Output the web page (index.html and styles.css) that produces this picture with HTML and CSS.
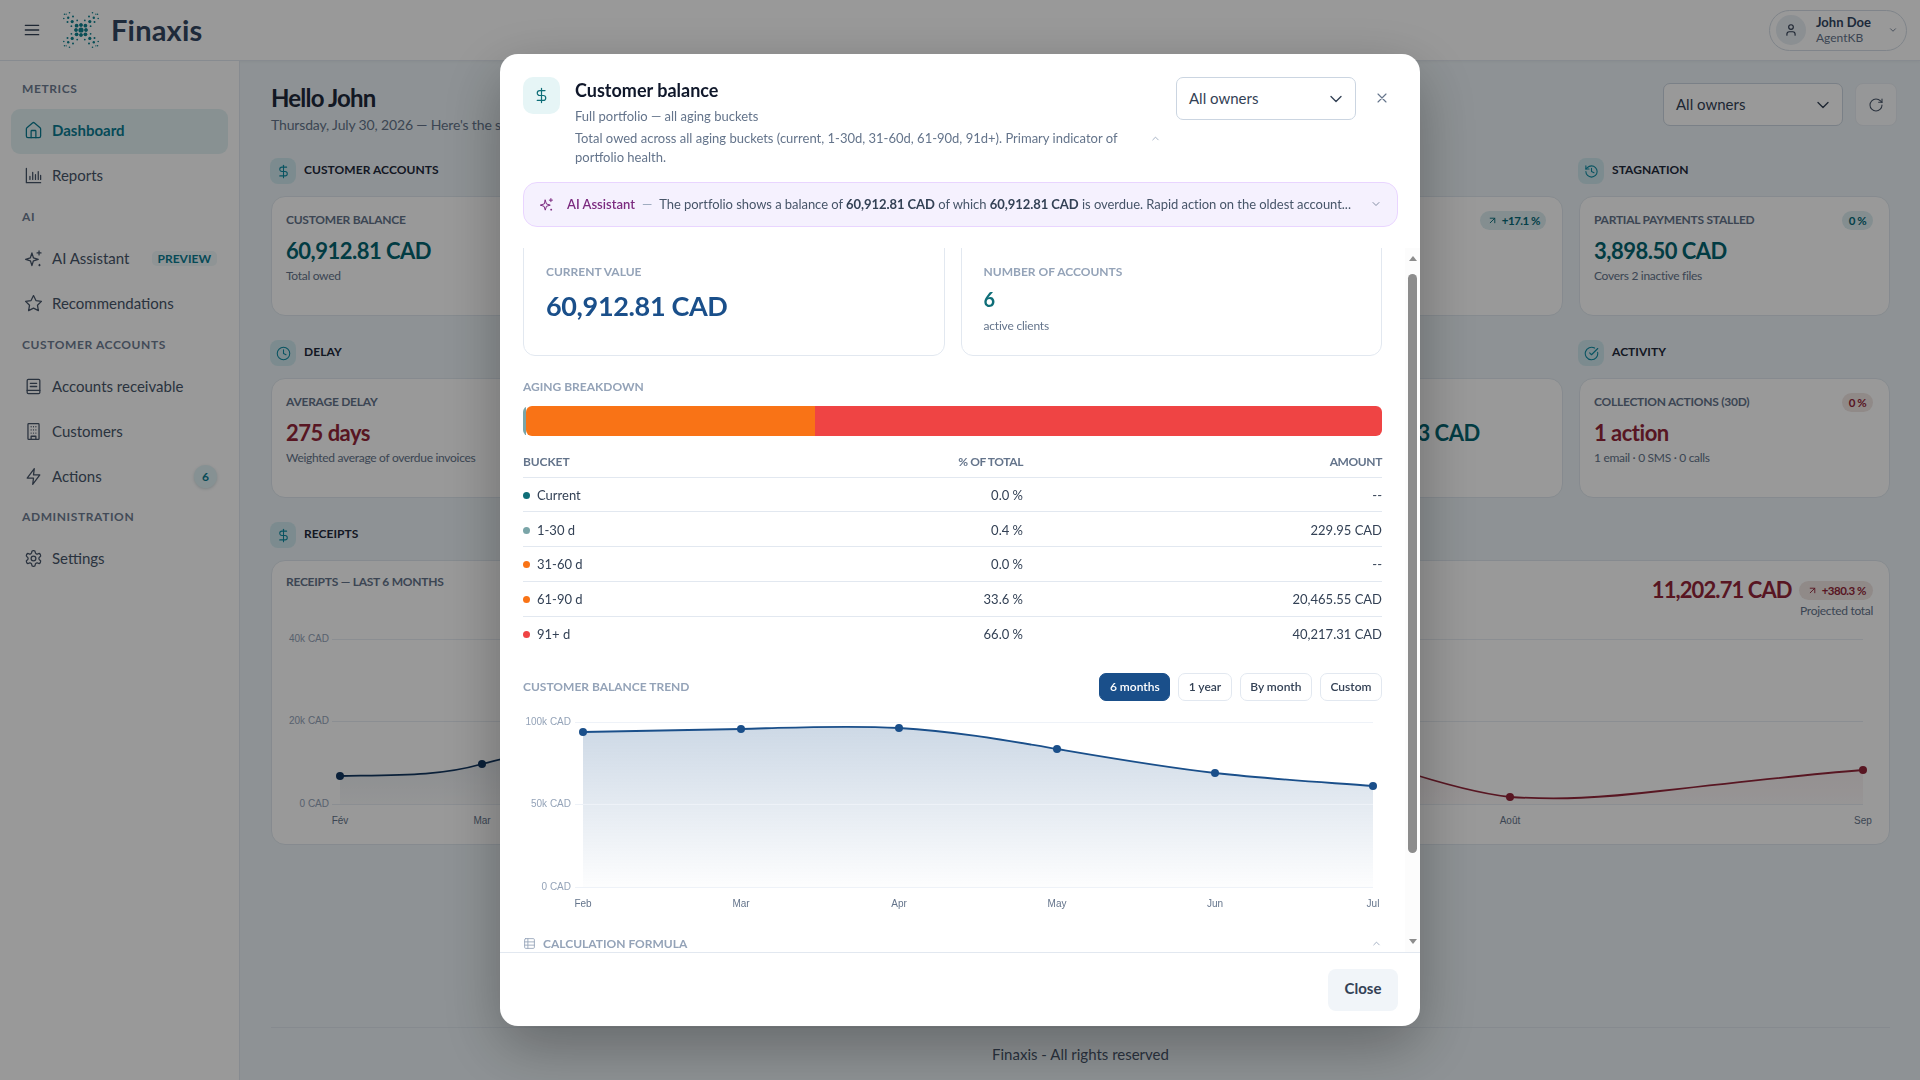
FILE: index.html
```html
<!DOCTYPE html>
<html lang="en">
<head>
<meta charset="utf-8">
<title>Finaxis</title>
<link rel="stylesheet" href="styles.css">
</head>
<body>
<svg class="sprite" xmlns="http://www.w3.org/2000/svg">
  <symbol id="i-home" viewBox="0 0 24 24"><path d="M15 21v-8a1 1 0 0 0-1-1h-4a1 1 0 0 0-1 1v8"/><path d="M3 10a2 2 0 0 1 .709-1.528l7-5.999a2 2 0 0 1 2.582 0l7 5.999A2 2 0 0 1 21 10v9a2 2 0 0 1-2 2H5a2 2 0 0 1-2-2z"/></symbol>
  <symbol id="i-chart" viewBox="0 0 24 24"><path d="M3 3v18h18"/><path d="M7.500 17v-4M11 17V8M14.500 17v-6M18 17V7M21 17v-5"/></symbol>
  <symbol id="i-spark" viewBox="0 0 24 24"><path d="M10 5l1.900 6.100L18 13l-6.100 1.900L10 21l-1.900-6.100L2 13l6.100-1.900z"/><path d="M19 2.500v5M16.500 5h5M19.500 19.500v1.500M18.800 20.300h1.500"/></symbol>
  <symbol id="i-star" viewBox="0 0 24 24"><path d="M12 2l3.090 6.260L22 9.270l-5 4.870 1.180 6.880L12 17.770l-6.180 3.250L7 14.140 2 9.270l6.910-1.010L12 2z"/></symbol>
  <symbol id="i-ledger" viewBox="0 0 24 24"><rect x="4" y="3" width="16" height="18" rx="1.500"/><path d="M8 8h8M8 12h8M4 17h16"/></symbol>
  <symbol id="i-building" viewBox="0 0 24 24"><rect x="5" y="2" width="14" height="20" rx="1"/><path d="M9 22v-4h6v4M9 6h.01M12 6h.01M15 6h.01M9 10h.01M12 10h.01M15 10h.01M9 14h.01M12 14h.01M15 14h.01"/></symbol>
  <symbol id="i-zap" viewBox="0 0 24 24"><path d="M13 2 4 14h8l-1 8 9-12h-8l1-8z"/></symbol>
  <symbol id="i-gear" viewBox="0 0 24 24"><path d="M12.220 2h-.44a2 2 0 0 0-2 2v.18a2 2 0 0 1-1 1.730l-.43.25a2 2 0 0 1-2 0l-.15-.08a2 2 0 0 0-2.730.73l-.22.38a2 2 0 0 0 .73 2.730l.15.1a2 2 0 0 1 1 1.720v.51a2 2 0 0 1-1 1.740l-.15.09a2 2 0 0 0-.73 2.730l.22.38a2 2 0 0 0 2.730.73l.15-.08a2 2 0 0 1 2 0l.43.25a2 2 0 0 1 1 1.730V20a2 2 0 0 0 2 2h.44a2 2 0 0 0 2-2v-.18a2 2 0 0 1 1-1.730l.43-.25a2 2 0 0 1 2 0l.15.08a2 2 0 0 0 2.730-.73l.22-.39a2 2 0 0 0-.73-2.730l-.15-.08a2 2 0 0 1-1-1.740v-.5a2 2 0 0 1 1-1.740l.15-.09a2 2 0 0 0 .73-2.730l-.22-.38a2 2 0 0 0-2.730-.73l-.15.08a2 2 0 0 1-2 0l-.43-.25a2 2 0 0 1-1-1.730V4a2 2 0 0 0-2-2z"/><circle cx="12" cy="12" r="3"/></symbol>
  <symbol id="i-dollar" viewBox="0 0 24 24"><path d="M12 2v20"/><path d="M17 5H9.500a3.500 3.500 0 0 0 0 7h5a3.500 3.500 0 0 1 0 7H6"/></symbol>
  <symbol id="i-clock" viewBox="0 0 24 24"><circle cx="12" cy="12" r="10"/><path d="M12 6v6l4 2"/></symbol>
  <symbol id="i-history" viewBox="0 0 24 24"><path d="M3 12a9 9 0 1 0 9-9 9.750 9.750 0 0 0-6.740 2.740L3 8"/><path d="M3 3v5h5"/><path d="M12 7v5l4 2"/></symbol>
  <symbol id="i-check" viewBox="0 0 24 24"><path d="M21.801 10A10 10 0 1 1 17 3.335"/><path d="m9 11 3 3L22 4"/></symbol>
  <symbol id="i-user" viewBox="0 0 24 24"><path d="M19 21v-2a4 4 0 0 0-4-4H9a4 4 0 0 0-4 4v2"/><circle cx="12" cy="7" r="4"/></symbol>
  <symbol id="i-refresh" viewBox="0 0 24 24"><path d="M21 12a9 9 0 1 1-9-9c2.520 0 4.930 1 6.740 2.740L21 8"/><path d="M21 3v5h-5"/></symbol>
  <symbol id="i-upright" viewBox="0 0 24 24"><path d="M7 7h10v10"/><path d="M7 17 17 7"/></symbol>
  <symbol id="i-down" viewBox="0 0 24 24"><path d="m6 9 6 6 6-6"/></symbol>
  <symbol id="i-up" viewBox="0 0 24 24"><path d="m18 15-6-6-6 6"/></symbol>
  <symbol id="i-x" viewBox="0 0 24 24"><path d="M18 6 6 18M6 6l12 12"/></symbol>
  <symbol id="i-table" viewBox="0 0 24 24"><rect x="3" y="3" width="18" height="18" rx="2"/><path d="M3 9h18M3 15h18M9 3v18"/></symbol>
  <symbol id="i-menu" viewBox="0 0 24 24"><path d="M2 5h20M2 12h20M2 19h20"/></symbol>
</svg>

<div class="app">
  <header class="topbar">
    <button class="burger"><svg class="ico ico-menu"><use href="#i-menu"/></svg></button>
    <svg class="logo" viewBox="0 0 40 40" aria-hidden="true">
      <defs>
        <g id="quad">
          <circle cx="4.400" cy="4.300" r="1.900"/><circle cx="8.800" cy="8.400" r="1.600"/><circle cx="12.800" cy="12.300" r="1.200"/><circle cx="16.500" cy="15.800" r="0.800"/>
          <circle cx="9.600" cy="3.800" r="0.900"/><circle cx="3.800" cy="9.600" r="0.900"/><circle cx="13.500" cy="8" r="1"/><circle cx="8" cy="13.500" r="1"/>
          <circle cx="17.200" cy="11.500" r="0.800"/><circle cx="11.500" cy="17.200" r="0.800"/><circle cx="5" cy="0" r="1.700"/><circle cx="0" cy="5" r="1.700"/>
          <circle cx="14.800" cy="15.800" r="0.600"/>
        </g>
      </defs>
      <g class="logo-dots" transform="translate(20 20)">
        <circle r="2.600"/>
        <use href="#quad"/><use href="#quad" transform="scale(-1 1)"/><use href="#quad" transform="scale(1 -1)"/><use href="#quad" transform="scale(-1 -1)"/>
      </g>
    </svg>
    <span class="brand">Finaxis</span>
    <div class="user">
      <span class="avatar"><svg class="ico ico-user"><use href="#i-user"/></svg></span>
      <span class="user-text"><b>John Doe</b><small>AgentKB</small></span>
      <svg class="ico ico-user-chev"><use href="#i-down"/></svg>
    </div>
  </header>

  <div class="shell">
    <nav class="sidebar">
      <div class="nav-label nav-label-first">METRICS</div>
      <a class="nav-item active"><svg class="ico"><use href="#i-home"/></svg><span>Dashboard</span></a>
      <a class="nav-item"><svg class="ico"><use href="#i-chart"/></svg><span>Reports</span></a>
      <div class="nav-label">AI</div>
      <a class="nav-item"><svg class="ico"><use href="#i-spark"/></svg><span>AI Assistant</span><em class="pill-preview">PREVIEW</em></a>
      <a class="nav-item"><svg class="ico"><use href="#i-star"/></svg><span>Recommendations</span></a>
      <div class="nav-label">CUSTOMER ACCOUNTS</div>
      <a class="nav-item"><svg class="ico"><use href="#i-ledger"/></svg><span>Accounts receivable</span></a>
      <a class="nav-item"><svg class="ico"><use href="#i-building"/></svg><span>Customers</span></a>
      <a class="nav-item"><svg class="ico"><use href="#i-zap"/></svg><span>Actions</span><em class="pill-count">6</em></a>
      <div class="nav-label nav-label-last">ADMINISTRATION</div>
      <a class="nav-item"><svg class="ico"><use href="#i-gear"/></svg><span>Settings</span></a>
    </nav>

    <main class="main">
      <div class="page-head">
        <div>
          <h1>Hello John</h1>
          <p>Thursday, July 30, 2026 — Here's the state of your portfolio</p>
        </div>
        <div class="page-tools">
          <div class="select"><span class="sel-text">All owners</span><svg class="ico ico-sel"><use href="#i-down"/></svg></div>
          <button class="refresh"><svg class="ico"><use href="#i-refresh"/></svg></button>
        </div>
      </div>

      <div class="kpi-grid">
        <div class="sec sec-4"><span class="sec-ico"><svg class="ico"><use href="#i-dollar"/></svg></span><span class="sec-text">CUSTOMER ACCOUNTS</span></div>
        <div class="sec"><span class="sec-ico"><svg class="ico"><use href="#i-history"/></svg></span><span class="sec-text">STAGNATION</span></div>

        <div class="card"><div class="card-top"><span class="card-label">CUSTOMER BALANCE</span></div><div class="val teal">60,912.81 CAD</div><div class="hint">Total owed</div></div>
        <div class="card"></div>
        <div class="card"></div>
        <div class="card"><div class="card-top"><span class="card-label">OVERDUE</span><span class="pill pill-teal"><svg class="ico ico-trend"><use href="#i-upright"/></svg>+17.1 %</span></div></div>
        <div class="card"><div class="card-top"><span class="card-label">PARTIAL PAYMENTS STALLED</span><span class="pill pill-teal pill-zero">0 %</span></div><div class="val teal">3,898.50 CAD</div><div class="hint">Covers 2 inactive files</div></div>

        <div class="sec sec-4"><span class="sec-ico"><svg class="ico"><use href="#i-clock"/></svg></span><span class="sec-text">DELAY</span></div>
        <div class="sec"><span class="sec-ico"><svg class="ico"><use href="#i-check"/></svg></span><span class="sec-text">ACTIVITY</span></div>

        <div class="card"><div class="card-top"><span class="card-label">AVERAGE DELAY</span></div><div class="val red">275 days</div><div class="hint">Weighted average of overdue invoices</div></div>
        <div class="card"></div>
        <div class="card"></div>
        <div class="card"><div class="card-top"><span class="card-label">AVERAGE</span></div><div class="val teal">Total: 110,152.83 CAD</div></div>
        <div class="card"><div class="card-top"><span class="card-label">COLLECTION ACTIONS (30D)</span><span class="pill pill-red pill-zero">0 %</span></div><div class="val red">1 action</div><div class="hint">1 email · 0 SMS · 0 calls</div></div>

        <div class="sec sec-5"><span class="sec-ico"><svg class="ico"><use href="#i-dollar"/></svg></span><span class="sec-text">RECEIPTS</span></div>

        <div class="card card-chart">
          <div class="chart-head">
            <span class="card-label">RECEIPTS — LAST 6 MONTHS</span>
            <div class="chart-total">
              <div class="chart-total-row"><span class="val-total">11,202.71 CAD</span><span class="pill pill-red pill-wide"><svg class="ico ico-trend"><use href="#i-upright"/></svg>+380.3 %</span></div>
              <div class="hint">Projected total</div>
            </div>
          </div>
          <svg class="receipts-svg" viewBox="286 625 1587 210">
            <defs>
              <linearGradient id="gBlue" x1="0" y1="0" x2="0" y2="1"><stop offset="0" stop-color="#12365f" stop-opacity=".12"/><stop offset="1" stop-color="#12365f" stop-opacity=".03"/></linearGradient>
              <linearGradient id="gRed" x1="0" y1="0" x2="0" y2="1"><stop offset="0" stop-color="#93263a" stop-opacity=".07"/><stop offset="1" stop-color="#93263a" stop-opacity=".03"/></linearGradient>
            </defs>
            <g class="grid-line"><path d="M332 639.500H1863M332 721.500H1863M332 804.500H1863"/></g>
            <g class="axis-y"><text x="329" y="642">40k CAD</text><text x="329" y="724">20k CAD</text><text x="329" y="807">0 CAD</text></g>
            <g class="axis-x"><text x="340" y="824">Fév</text><text x="482" y="824">Mar</text><text x="1510" y="824">Août</text><text x="1863" y="824">Sep</text></g>
            <path fill="url(#gBlue)" d="M340 776C400 775 440 776 482 764C520 754 560 745 640 740V804H340Z"/>
            <path fill="url(#gRed)" d="M1400 770C1440 783 1475 793 1510 797C1560 800 1600 798 1660 791C1730 783 1800 775 1863 770V804H1400Z"/>
            <path class="line-navy" d="M340 776C400 775 440 776 482 764C520 754 560 745 640 740"/>
            <path class="line-red" d="M1400 770C1440 783 1475 793 1510 797C1560 800 1600 798 1660 791C1730 783 1800 775 1863 770"/>
            <circle class="dot-navy" cx="340" cy="776" r="4"/><circle class="dot-navy" cx="482" cy="764" r="4"/>
            <circle class="dot-red" cx="1510" cy="797" r="4"/><circle class="dot-red" cx="1863" cy="770" r="4"/>
          </svg>
        </div>
      </div>

      <footer class="page-foot">Finaxis - All rights reserved</footer>
    </main>
  </div>
</div>

<div class="overlay">
  <section class="modal">
    <div class="m-head">
      <span class="m-ico"><svg class="ico"><use href="#i-dollar"/></svg></span>
      <div class="m-titles">
        <h2>Customer balance</h2>
        <p class="m-sub">Full portfolio — all aging buckets</p>
        <p class="m-desc">Total owed across all aging buckets (current, 1-30d, 31-60d, 61-90d, 91d+). Primary indicator of portfolio health.</p>
      </div>
      <svg class="ico ico-collapse"><use href="#i-up"/></svg>
      <div class="select select-modal"><span class="sel-text">All owners</span><svg class="ico ico-sel"><use href="#i-down"/></svg></div>
      <svg class="ico ico-close"><use href="#i-x"/></svg>
    </div>

    <div class="ai-strip">
      <svg class="ico ico-ai"><use href="#i-spark"/></svg>
      <span class="ai-name">AI Assistant</span><span class="ai-dash">—</span>
      <span class="ai-text">The portfolio shows a balance of <b>60,912.81 CAD</b> of which <b>60,912.81 CAD</b> is overdue. Rapid action on the oldest account...</span>
      <svg class="ico ico-ai-chev"><use href="#i-down"/></svg>
    </div>

    <div class="m-scroll">
      <div class="m-body" id="modalBody">
        <div class="stat-row">
          <div class="stat"><div class="stat-label">CURRENT VALUE</div><div class="stat-big">60,912.81 CAD</div></div>
          <div class="stat"><div class="stat-label">NUMBER OF ACCOUNTS</div><div class="stat-num">6</div><div class="stat-hint">active clients</div></div>
        </div>

        <div class="m-label m-label-aging">AGING BREAKDOWN</div>
        <div class="aging-bar">
          <span class="seg seg-a"></span><span class="seg seg-b"></span><span class="seg seg-c"></span>
        </div>

        <table class="aging-table">
          <thead><tr><th>BUCKET</th><th class="num">% OF TOTAL</th><th class="num">AMOUNT</th></tr></thead>
          <tbody>
            <tr><td><i class="dot dot-1"></i>Current</td><td class="num">0.0 %</td><td class="num">--</td></tr>
            <tr><td><i class="dot dot-2"></i>1-30 d</td><td class="num">0.4 %</td><td class="num">229.95 CAD</td></tr>
            <tr><td><i class="dot dot-3"></i>31-60 d</td><td class="num">0.0 %</td><td class="num">--</td></tr>
            <tr><td><i class="dot dot-3"></i>61-90 d</td><td class="num">33.6 %</td><td class="num">20,465.55 CAD</td></tr>
            <tr><td><i class="dot dot-4"></i>91+ d</td><td class="num">66.0 %</td><td class="num">40,217.31 CAD</td></tr>
          </tbody>
        </table>

        <div class="trend-head">
          <span class="m-label">CUSTOMER BALANCE TREND</span>
          <div class="range">
            <button class="rbtn rbtn-on">6 months</button><button class="rbtn">1 year</button><button class="rbtn">By month</button><button class="rbtn">Custom</button>
          </div>
        </div>

        <svg class="trend-svg" viewBox="523 710 859 205">
          <defs>
            <linearGradient id="gTrend" x1="0" y1="0" x2="0" y2="1"><stop offset="0" stop-color="#1a4f8a" stop-opacity=".22"/><stop offset="1" stop-color="#1a4f8a" stop-opacity=".01"/></linearGradient>
          </defs>
          <path fill="url(#gTrend)" d="M583 732C636 731 688 730 741 729C794 727.500 846 725 899 728C952 731 1004 740 1057 749C1110 758 1162 767 1215 773C1268 779 1320 782 1373 786V887H583Z"/>
          <g class="grid-line-m"><path d="M575 722.500H1373M575 804.500H1373M575 887.500H1373"/></g>
          <g class="axis-y-m"><text x="571" y="724.500">100k CAD</text><text x="571" y="806.500">50k CAD</text><text x="571" y="889.500">0 CAD</text></g>
          <g class="axis-x-m"><text x="583" y="906.500">Feb</text><text x="741" y="906.500">Mar</text><text x="899" y="906.500">Apr</text><text x="1057" y="906.500">May</text><text x="1215" y="906.500">Jun</text><text x="1373" y="906.500">Jul</text></g>
          <path class="line-blue" d="M583 732C636 731 688 730 741 729C794 727.500 846 725 899 728C952 731 1004 740 1057 749C1110 758 1162 767 1215 773C1268 779 1320 782 1373 786"/>
          <circle class="dot-blue" cx="583" cy="732" r="4"/><circle class="dot-blue" cx="741" cy="729" r="4"/><circle class="dot-blue" cx="899" cy="728" r="4"/><circle class="dot-blue" cx="1057" cy="749" r="4"/><circle class="dot-blue" cx="1215" cy="773" r="4"/><circle class="dot-blue" cx="1373" cy="786" r="4"/>
        </svg>

        <div class="formula-head"><svg class="ico ico-table"><use href="#i-table"/></svg><span>CALCULATION FORMULA</span><svg class="ico ico-formula-chev"><use href="#i-up"/></svg></div>
        <div class="formula-body">Sum of open balances across all aging buckets.</div>
      </div>
      <div class="scrollbar" aria-hidden="true">
        <span class="sb-up"></span><span class="sb-thumb"></span><span class="sb-down"></span>
      </div>
    </div>

    <div class="m-foot"><button class="btn-close">Close</button></div>
  </section>
</div>
<script src="script.js"></script>
</body>
</html>
```
FILE: styles.css
```css
*{box-sizing:border-box}
html,body{margin:0;height:100%;overflow:hidden}
body{font-family:"Lato","Liberation Sans",sans-serif;color:#334155;background:#edf4f8}
.sprite{display:none}
.ico{width:16px;height:16px;fill:none;stroke:currentColor;stroke-width:2;stroke-linecap:round;stroke-linejoin:round;flex:none}
button{font:inherit;border:0;background:none;padding:0;color:inherit}

.app{height:100vh;display:flex;flex-direction:column}
.topbar{height:61px;flex:none;background:#fff;border-bottom:1px solid #e2e8f0;box-shadow:0 1px 3px rgba(0,0,0,.04);display:flex;align-items:center;padding:0 13px 0 24px}
.burger{display:flex;width:16px;height:16px;color:#334155}
.ico-menu{width:16px;height:16px}
.logo{width:40px;height:40px;margin-left:21px}
.logo-dots{fill:#0f8290}
.brand{font-size:29px;font-weight:700;color:#334662;margin-left:10px;letter-spacing:.2px;padding-bottom:2px}
.user{margin-left:auto;width:138px;height:41px;border:1px solid #d5dde6;border-radius:21px;display:flex;align-items:center;padding:0 8px 0 6px}
.avatar{width:30px;height:30px;border-radius:50%;background:#e8eef4;display:flex;align-items:center;justify-content:center;color:#334155}
.ico-user{width:14px;height:14px}
.user-text{display:flex;flex-direction:column;margin-left:10px;line-height:16px}
.user-text b{font-size:13px;font-weight:700;color:#334662}
.user-text small{font-size:12px;color:#64748b}
.ico-user-chev{width:10px;height:10px;margin-left:auto;color:#64748b}

.shell{flex:1;display:flex;min-height:0}
.sidebar{width:240px;flex:none;background:#fff;border-right:1px solid #e2e8f0;padding:19px 11px 0}
.nav-label{height:18px;line-height:18px;margin:9px 0 11px 11px;font-size:12px;font-weight:700;letter-spacing:.6px;color:#6f7d93}
.nav-label-first{margin-top:0}
.nav-label-last{margin-top:8px}
.nav-item{height:45px;display:flex;align-items:center;padding:0 11px 3px 13px;font-size:15px;color:#475569;border-radius:9px}
.nav-item .ico{width:19px;height:19px;stroke-width:1.6;margin-right:9px}
.nav-item.active{background:#e3f2f4;color:#0b7c92;font-weight:700}
.pill-preview{margin-left:auto;font-style:normal;font-size:12px;font-weight:700;color:#0b7c92;background:#eef7f9;border-radius:5px;padding:0 6px;height:15px;line-height:15px}
.pill-count{margin-left:auto;font-style:normal;font-size:12px;font-weight:700;color:#0b7c92;background:#e0f2f5;width:23px;height:23px;border-radius:50%;display:flex;align-items:center;justify-content:center;box-shadow:0 1px 3px rgba(0,60,80,.18)}

.main{flex:1;min-width:0;display:flex;flex-direction:column;padding:22px 30px 0 31px}
.page-head{display:flex;justify-content:space-between;align-items:flex-start;height:75px;margin-right:-7px}
.page-head h1{margin:0;font-size:24px;line-height:30px;font-weight:700;color:#1e293b;letter-spacing:-.8px}
.page-head p{margin:3px 0 0;font-size:14px;line-height:18px;color:#64748b;letter-spacing:-.15px}
.page-tools{display:flex;gap:12px}
.select{width:180px;height:43px;border:1px solid #cbd5e1;border-radius:7px;background:#fff;display:flex;align-items:center;justify-content:space-between;padding:0 9px 0 12px;font-size:15px;color:#334155}
.sel-text{padding-bottom:2px}
.ico-sel{width:20px;height:20px;stroke-width:1.6}
.refresh{width:42px;height:43px;border:1px solid #e8edf3;border-radius:8px;background:#fbfcfd;display:flex;align-items:center;justify-content:center;color:#475569}
.refresh .ico{stroke-width:1.6}

.kpi-grid{display:grid;grid-template-columns:repeat(5,311px);column-gap:16px;row-gap:0;grid-template-rows:26px 156px 26px 156px 26px 297px}
.sec{display:flex;align-items:center;font-size:12px;font-weight:700;letter-spacing:.05px;color:#1e293b;margin-left:-1px}
.sec-text{padding-bottom:3px}
.sec-4{grid-column:span 4}
.sec-5{grid-column:span 5}
.sec-ico{width:26px;height:26px;border-radius:8px;background:#cfe8ee;display:flex;align-items:center;justify-content:center;margin-right:8px;color:#0e8ba3}
.sec-ico .ico{width:15px;height:15px;stroke-width:1.7}
.card{background:#fff;border:1px solid #dfe7ef;border-radius:14px;padding:13px 16px 13px 14px;margin-top:12px;margin-bottom:24px;min-width:0}
.card-top{display:flex;justify-content:space-between;align-items:center;height:19px}
.card-label{font-size:12px;font-weight:700;color:#64748b;letter-spacing:-.25px;white-space:nowrap;padding-bottom:1px}
.val{font-size:22px;line-height:30px;font-weight:700;margin-top:7px;white-space:nowrap;letter-spacing:-.5px}
.teal{color:#046470}
.red{color:#93263a}
.hint{font-size:12px;line-height:16px;color:#64748b;margin-top:2px;letter-spacing:-.3px}
.pill{display:inline-flex;align-items:center;justify-content:center;height:19px;border-radius:10px;padding:0 6px;font-size:11.5px;font-weight:700;white-space:nowrap;letter-spacing:-.5px}
.card-top .pill{margin-top:1px}
.pill-zero{min-width:31px}
.pill-wide{padding:0 7px}
.pill-teal{background:#dcedf1;color:#056a78}
.pill-red{background:#f1e6e3;color:#93263a}
.ico-trend{width:11px;height:11px;stroke-width:2;margin-right:4px;margin-left:1px}
.card-chart{grid-column:span 5;margin-bottom:0;height:285px;padding:13px 16px 0 14px;display:flex;flex-direction:column}
.chart-head{display:flex;justify-content:space-between;align-items:flex-start;height:51px}
.chart-head .card-label{line-height:15px}
.chart-total{text-align:right}
.chart-total-row{display:flex;align-items:center;gap:7px;margin-top:4px;height:24px}
.val-total{font-size:22px;font-weight:700;color:#93263a;line-height:24px;letter-spacing:-.9px}
.chart-total .hint{margin-top:1px}
.receipts-svg{width:1587px;height:210px;flex:none;overflow:visible}
.grid-line path{stroke:#e8edf3;stroke-width:1;fill:none}
.axis-y text,.axis-x text,.axis-y-m text,.axis-x-m text{font:10px "Liberation Sans",sans-serif;fill:#94a3b8}
.axis-y text,.axis-y-m text{text-anchor:end}
.axis-x text,.axis-x-m text{text-anchor:middle;fill:#64748b}
.line-blue{fill:none;stroke:#1a4f8a;stroke-width:1.8}
.line-navy{fill:none;stroke:#12365f;stroke-width:1.8}
.line-red{fill:none;stroke:#93263a;stroke-width:1.8}
.dot-blue{fill:#1a4f8a}
.dot-navy{fill:#12365f}
.dot-red{fill:#93263a}

.page-foot{margin-top:auto;height:53px;border-top:1px solid #dfe7ef;display:flex;align-items:center;justify-content:center;font-size:15px;color:#475569}

.overlay{position:fixed;inset:0;background:rgba(0,0,0,.4);display:flex;align-items:center;justify-content:center}
.modal{width:920px;height:972px;background:#fff;border-radius:18px;box-shadow:0 20px 60px rgba(0,0,0,.3);display:flex;flex-direction:column;overflow:hidden}
.m-head{display:flex;align-items:flex-start;padding:23px 22px 0 23px;height:128px;flex:none}
.m-ico{width:37px;height:37px;border-radius:10px;background:#e6f5f6;display:flex;align-items:center;justify-content:center;color:#0f6e78;flex:none}
.m-ico .ico{width:17px;height:17px;stroke-width:1.7}
.m-titles{margin-left:15px;width:565px}
.m-titles h2{margin:2px 0 0;font-size:18px;line-height:22px;font-weight:700;color:#0f172a}
.m-sub{margin:6px 0 0;font-size:13px;line-height:19px;color:#64748b}
.m-desc{margin:3px 0 0;font-size:13px;line-height:19px;color:#64748b}
.ico-collapse{width:11px;height:11px;margin:56px 0 0 10px;color:#94a3b8;stroke-width:1.8}
.select-modal{margin-left:15px}
.ico-close{width:16px;height:16px;color:#64748b;margin:13px 0 0 18px;stroke-width:1.7}
.ai-strip{height:45px;flex:none;margin:0 22px 0 23px;background:#f5f1fe;border:1px solid #e9d5ff;border-radius:14px;display:flex;align-items:center;padding:0 15px 1px 15px;font-size:13px;color:#475569;white-space:nowrap}
.ico-ai{width:15px;height:15px;color:#7b2a7f;stroke-width:1.6}
.ai-name{color:#7b2a7f;font-weight:600;margin-left:13px}
.ai-dash{color:#94a3b8;margin:0 7px}
.ai-text{letter-spacing:-.05px}
.ai-text b{font-weight:700;color:#334155}
.ico-ai-chev{width:12px;height:12px;color:#64748b;margin-left:auto;stroke-width:1.6}

.m-scroll{flex:1;min-height:0;margin-top:21px;position:relative}
.m-body{height:100%;padding:0 38px 0 23px;overflow:hidden}
.scrollbar{position:absolute;top:0;right:0;bottom:0;width:15px;background:#fcfcfc;display:flex;flex-direction:column;align-items:center}
.sb-up,.sb-down{width:0;height:0;border-left:4.5px solid transparent;border-right:4.5px solid transparent}
.sb-up{margin-top:8px;border-bottom:5px solid #8c8c8c}
.sb-thumb{width:9px;height:579px;margin-top:13px;border-radius:5px;background:#8c8c8c}
.sb-down{margin-top:86px;border-top:5px solid #8c8c8c}

.stat-row{display:grid;grid-template-columns:1fr 1fr;gap:16px}
.stat{height:121px;border:1px solid #e2e8f0;border-radius:12px;padding:28px 22px 0}
.stat-label{font-size:12px;line-height:15px;font-weight:700;color:#94a3b8;letter-spacing:0}
.stat-big{font-size:27px;line-height:36px;font-weight:700;color:#1a4f8a;margin-top:9px;letter-spacing:-.35px}
.stat-num{font-size:20px;line-height:26px;font-weight:700;color:#0f6e78;margin-top:7px}
.stat-hint{font-size:12px;line-height:16px;color:#64748b;margin-top:6px;letter-spacing:-.2px}
.m-label{font-size:12px;line-height:18px;font-weight:700;color:#94a3b8;letter-spacing:0}
.m-label-aging{margin-top:22px}
.aging-bar{display:flex;height:30px;margin-top:10px;border-radius:6px;overflow:hidden}
.seg-a{width:3px;background:#7aa5a8}
.seg-b{width:289px;background:#f97316;border-radius:6px 0 0 6px}
.seg-c{flex:1;background:#ef4444}
.aging-table{width:100%;border-collapse:collapse;margin-top:10px;table-layout:fixed;font-size:13px;color:#334155}
.aging-table th:nth-child(1){width:250px}
.aging-table th:nth-child(2){width:250px}
.aging-table th{height:31px;font-size:12px;font-weight:700;color:#64748b;text-align:left;border-bottom:1px solid #e2e8f0;padding:0;letter-spacing:-.1px}
.aging-table td{height:34.8px;padding:1px 0 0;border-bottom:1px solid #e2e8f0}
.aging-table tr:last-child td{border-bottom:0}
.aging-table .num{text-align:right}
.aging-table th.num{letter-spacing:-.4px}
.dot{display:inline-block;width:7px;height:7px;border-radius:50%;margin-right:7px;vertical-align:1px}
.dot-1{background:#0f6e78}
.dot-2{background:#7aa5a8}
.dot-3{background:#f97316}
.dot-4{background:#ef4444}
.trend-head{display:flex;justify-content:space-between;align-items:center;margin-top:22px;height:28px}
.range{display:flex;gap:8px}
.rbtn{height:28px;border:1px solid #e2e8f0;border-radius:7px;font-size:12px;font-weight:600;color:#334155;background:#fff;padding:0 9.5px}
.rbtn-on{background:#1a4f8a;border-color:#1a4f8a;color:#fff}
.trend-svg{display:block;width:859px;height:205px;margin-top:9px}
.grid-line-m path{stroke:#eef2f8;stroke-width:1;fill:none}
.formula-head{display:flex;align-items:center;height:20px;margin-top:19px;font-size:12px;font-weight:700;color:#94a3b8;letter-spacing:0}
.ico-table{width:13px;height:13px;stroke-width:1.6;margin-right:7px}
.ico-formula-chev{width:11px;height:11px;margin-left:auto;margin-right:0;stroke-width:1.8}
.formula-body{font-size:13px;color:#64748b;padding:18px 0 60px}
.m-foot{height:74px;flex:none;border-top:1px solid #e2e8f0;display:flex;align-items:center;justify-content:flex-end;padding:0 22px}
.btn-close{width:70px;height:42px;border-radius:8px;background:#f1f5f9;font-size:15px;font-weight:700;color:#334155;padding-bottom:4px}
```
FILE: script.js
```js
document.getElementById('modalBody').scrollTop = 13;
```
